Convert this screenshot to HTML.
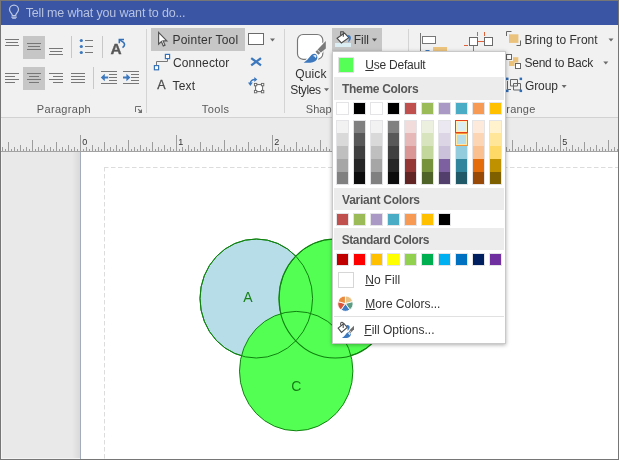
<!DOCTYPE html>
<html>
<head>
<meta charset="utf-8">
<title>Visio Fill Menu</title>
<style>
html,body{margin:0;padding:0;}
body{width:619px;height:460px;overflow:hidden;background:#fff;font-family:"Liberation Sans",sans-serif;}
#frame{position:absolute;left:0;top:0;width:619px;height:460px;background:#767676;overflow:hidden;}
#app{position:absolute;left:1px;top:1px;width:617px;height:458px;overflow:hidden;background:#fff;}
#wrap{position:absolute;left:-1px;top:-1px;width:619px;height:460px;will-change:transform;}
.abs{position:absolute;}
#title{left:1px;top:1px;width:617px;height:24px;background:#3955a3;}
#ribbon{left:1px;top:25px;width:617px;height:92px;background:#f1f1f1;}
#ribline{left:1px;top:117px;width:617px;height:1px;background:#d2d2d2;}
#rulerbg{left:1px;top:118px;width:617px;height:33px;background:#ebebeb;}
#paste{left:1px;top:152px;width:79px;height:307px;background:linear-gradient(to right,#e9e9e9 0,#e9e9e9 71px,#d9d9d9 79px);}
#pageedge{left:80px;top:152px;width:1px;height:307px;background:#a4adbb;}
#page{left:81px;top:152px;width:537px;height:307px;background:#fff;}
#margin{display:none;}
.t{position:absolute;white-space:nowrap;line-height:1;color:#333;font-size:12px;}
.gl{position:absolute;white-space:nowrap;line-height:1;color:#5a5a5a;font-size:11px;}
.rl{position:absolute;white-space:nowrap;line-height:1;color:#333;font-size:9px;}
.hl{position:absolute;background:#c6c6c6;}
.vsep{position:absolute;width:1px;background:#c8c8c8;}
.gsep{position:absolute;width:1px;background:#d4d4d4;top:29px;height:84px;}
svg{position:absolute;left:0;top:0;overflow:visible;}
#menu{left:332px;top:51px;width:172px;height:291px;background:#fff;border:1px solid #c9c9c9;box-shadow:0 1px 4px rgba(0,0,0,.32);}
.mh{position:absolute;left:334px;width:170px;background:#ececec;}
.mt{position:absolute;white-space:nowrap;line-height:1;color:#333;font-size:12px;}
.mb{position:absolute;white-space:nowrap;line-height:1;color:#575757;font-size:12px;font-weight:bold;}
.sw{position:absolute;width:11px;height:11px;border:1px solid #e4e4e6;}
.col{position:absolute;width:11px;height:63px;border:1px solid #e4e4e6;top:120px;}
.col i{display:block;height:13px;}
.col i:first-child{height:12px;}
.col i:last-child{height:12px;}
u{text-decoration:underline;text-underline-offset:1px;text-decoration-thickness:1px;}
</style>
</head>
<body>
<div id="frame"><div id="app"><div id="wrap">
<div id="title" class="abs"></div>
<div id="ribbon" class="abs"></div>
<div id="ribline" class="abs"></div>
<div id="rulerbg" class="abs"></div>
<div id="paste" class="abs"></div>
<div id="page" class="abs"></div>
<div id="pageedge" class="abs"></div>
<div class="abs" style="left:1px;top:118px;width:1px;height:341px;background:#f3f3f3;"></div>
<div class="abs" style="left:1px;top:458px;width:79px;height:1px;background:#f3f3f3;"></div>
<div id="margin" class="abs"></div>
<svg width="619" height="460" viewBox="0 0 619 460">
<rect x="1" y="151" width="617" height="1" fill="#a3a3a3"/>
<path d="M104 167.5 H618" stroke="#dcdcdc" stroke-width="1" stroke-dasharray="4.5 2.5" fill="none"/><path d="M104.5 167 V459" stroke="#dcdcdc" stroke-width="1" stroke-dasharray="4.5 2.5" fill="none"/>
<path d="M2.5 151v-4M5.5 151v-2M8.5 151v-9M11.5 151v-2M14.5 151v-4M17.5 151v-2M20.5 151v-6M23.5 151v-2M26.5 151v-4M29.5 151v-2M32.5 151v-11M35.5 151v-2M38.5 151v-4M41.5 151v-2M44.5 151v-6M47.5 151v-2M50.5 151v-4M53.5 151v-2M56.5 151v-9M59.5 151v-2M62.5 151v-4M65.5 151v-2M68.5 151v-6M71.5 151v-2M74.5 151v-4M77.5 151v-2M80.5 151v-16M83.5 151v-2M86.5 151v-4M89.5 151v-2M92.5 151v-6M95.5 151v-2M98.5 151v-4M101.5 151v-2M104.5 151v-9M107.5 151v-2M110.5 151v-4M113.5 151v-2M116.5 151v-6M119.5 151v-2M122.5 151v-4M125.5 151v-2M128.5 151v-11M131.5 151v-2M134.5 151v-4M137.5 151v-2M140.5 151v-6M143.5 151v-2M146.5 151v-4M149.5 151v-2M152.5 151v-9M155.5 151v-2M158.5 151v-4M161.5 151v-2M164.5 151v-6M167.5 151v-2M170.5 151v-4M173.5 151v-2M176.5 151v-16M179.5 151v-2M182.5 151v-4M185.5 151v-2M188.5 151v-6M191.5 151v-2M194.5 151v-4M197.5 151v-2M200.5 151v-9M203.5 151v-2M206.5 151v-4M209.5 151v-2M212.5 151v-6M215.5 151v-2M218.5 151v-4M221.5 151v-2M224.5 151v-11M227.5 151v-2M230.5 151v-4M233.5 151v-2M236.5 151v-6M239.5 151v-2M242.5 151v-4M245.5 151v-2M248.5 151v-9M251.5 151v-2M254.5 151v-4M257.5 151v-2M260.5 151v-6M263.5 151v-2M266.5 151v-4M269.5 151v-2M272.5 151v-16M275.5 151v-2M278.5 151v-4M281.5 151v-2M284.5 151v-6M287.5 151v-2M290.5 151v-4M293.5 151v-2M296.5 151v-9M299.5 151v-2M302.5 151v-4M305.5 151v-2M308.5 151v-6M311.5 151v-2M314.5 151v-4M317.5 151v-2M320.5 151v-11M323.5 151v-2M326.5 151v-4M329.5 151v-2M332.5 151v-6M335.5 151v-2M338.5 151v-4M341.5 151v-2M344.5 151v-9M347.5 151v-2M350.5 151v-4M353.5 151v-2M356.5 151v-6M359.5 151v-2M362.5 151v-4M365.5 151v-2M368.5 151v-16M371.5 151v-2M374.5 151v-4M377.5 151v-2M380.5 151v-6M383.5 151v-2M386.5 151v-4M389.5 151v-2M392.5 151v-9M395.5 151v-2M398.5 151v-4M401.5 151v-2M404.5 151v-6M407.5 151v-2M410.5 151v-4M413.5 151v-2M416.5 151v-11M419.5 151v-2M422.5 151v-4M425.5 151v-2M428.5 151v-6M431.5 151v-2M434.5 151v-4M437.5 151v-2M440.5 151v-9M443.5 151v-2M446.5 151v-4M449.5 151v-2M452.5 151v-6M455.5 151v-2M458.5 151v-4M461.5 151v-2M464.5 151v-16M467.5 151v-2M470.5 151v-4M473.5 151v-2M476.5 151v-6M479.5 151v-2M482.5 151v-4M485.5 151v-2M488.5 151v-9M491.5 151v-2M494.5 151v-4M497.5 151v-2M500.5 151v-6M503.5 151v-2M506.5 151v-4M509.5 151v-2M512.5 151v-11M515.5 151v-2M518.5 151v-4M521.5 151v-2M524.5 151v-6M527.5 151v-2M530.5 151v-4M533.5 151v-2M536.5 151v-9M539.5 151v-2M542.5 151v-4M545.5 151v-2M548.5 151v-6M551.5 151v-2M554.5 151v-4M557.5 151v-2M560.5 151v-16M563.5 151v-2M566.5 151v-4M569.5 151v-2M572.5 151v-6M575.5 151v-2M578.5 151v-4M581.5 151v-2M584.5 151v-9M587.5 151v-2M590.5 151v-4M593.5 151v-2M596.5 151v-6M599.5 151v-2M602.5 151v-4M605.5 151v-2M608.5 151v-11M611.5 151v-2M614.5 151v-4M617.5 151v-2" stroke="#9c9c9c" stroke-width="1" fill="none"/>

<ellipse cx="256.3" cy="298.5" rx="56.3" ry="59.5" fill="#b7dde8" stroke="#0f820f" stroke-width="1"/>
<ellipse cx="335.3" cy="298.5" rx="56.3" ry="59.5" fill="#54ff54" stroke="#0f820f" stroke-width="1"/>
<ellipse cx="296.2" cy="371.1" rx="56.7" ry="59.7" fill="#54ff54" stroke="#0f820f" stroke-width="1"/>
<ellipse cx="256.3" cy="298.5" rx="56.3" ry="59.5" fill="none" stroke="#0f820f" stroke-width="1"/>
<ellipse cx="335.3" cy="298.5" rx="56.3" ry="59.5" fill="none" stroke="#0f820f" stroke-width="1.1"/>
<text x="247.8" y="302.3" text-anchor="middle" font-family="Liberation Sans" font-size="14" fill="#178017">A</text>
<text x="296.2" y="391.2" text-anchor="middle" font-family="Liberation Sans" font-size="14" fill="#178017">C</text>

</svg>
<span class="rl" style="left:82.3px;top:138px;">0</span><span class="rl" style="left:178.3px;top:138px;">1</span><span class="rl" style="left:274.3px;top:138px;">2</span><span class="rl" style="left:370.3px;top:138px;">3</span><span class="rl" style="left:466.3px;top:138px;">4</span><span class="rl" style="left:562.3px;top:138px;">5</span>
<div class="hl" style="left:23px;top:36px;width:22px;height:23px;"></div>
<div class="hl" style="left:23px;top:67px;width:22px;height:23px;"></div>
<div class="hl" style="left:151px;top:28px;width:94px;height:23px;"></div>
<div class="hl" style="left:332px;top:28px;width:50px;height:23px;"></div>
<div class="vsep" style="left:71px;top:36px;height:22px;"></div>
<div class="vsep" style="left:102px;top:36px;height:22px;"></div>
<div class="vsep" style="left:93px;top:67px;height:22px;"></div>
<div class="gsep" style="left:146px;"></div>
<div class="gsep" style="left:284px;"></div>
<div class="gsep" style="left:408px;"></div>
<span class="t" id="t_tell" style="top:7px;font-size:12.5px;left:25.65px;letter-spacing:-0.163px;color:#b7c2e2;">Tell me what you want to do...</span>
<span class="t" id="t_pointer" style="top:34px;font-size:12px;left:172.48px;letter-spacing:0.231px;">Pointer Tool</span>
<span class="t" id="t_conn" style="top:57px;font-size:12px;left:172.94px;letter-spacing:0.118px;">Connector</span>
<span class="t" id="t_text" style="top:80px;font-size:12px;left:172.57px;letter-spacing:0.179px;">Text</span>
<span class="t" id="t_quick" style="top:68px;font-size:12px;left:295.29px;letter-spacing:0.110px;">Quick</span>
<span class="t" id="t_styles" style="top:84px;font-size:12px;left:290.30px;letter-spacing:-0.381px;">Styles</span>
<span class="t" id="t_fill" style="top:34px;font-size:12px;left:353.78px;letter-spacing:-0.018px;">Fill</span>
<span class="t" id="t_btf" style="top:34px;font-size:12px;left:524.48px;letter-spacing:0.037px;">Bring to Front</span>
<span class="t" id="t_stb" style="top:57px;font-size:12px;left:524.40px;letter-spacing:-0.219px;">Send to Back</span>
<span class="t" id="t_group" style="top:80px;font-size:12px;left:524.94px;letter-spacing:-0.086px;">Group</span>
<span class="gl" id="t_para" style="top:104px;font-size:11px;left:36.87px;letter-spacing:0.310px;">Paragraph</span>
<span class="gl" id="t_tools" style="top:104px;font-size:11px;left:201.71px;letter-spacing:0.425px;">Tools</span>
<span class="gl" id="t_shape" style="top:104px;font-size:11px;left:305.80px;letter-spacing:0.02px;">Shape Styles</span>
<span class="gl" id="t_arr" style="top:104px;font-size:11px;right:83.50px;letter-spacing:0.2px;">Arrange</span>
<svg width="619" height="460" viewBox="0 0 619 460">
<rect x="5" y="39" width="14" height="1" fill="#777"/>
<rect x="6" y="42" width="12" height="1" fill="#777"/>
<rect x="5" y="45" width="14" height="1" fill="#777"/>
<rect x="27" y="43" width="14" height="1" fill="#777"/>
<rect x="28" y="46" width="12" height="1" fill="#777"/>
<rect x="27" y="49" width="14" height="1" fill="#777"/>
<rect x="49" y="48" width="14" height="1" fill="#777"/>
<rect x="50" y="51" width="12" height="1" fill="#777"/>
<rect x="49" y="54" width="14" height="1" fill="#777"/>
<rect x="5" y="73" width="14" height="1" fill="#777"/>
<rect x="27" y="73" width="14" height="1" fill="#777"/>
<rect x="49" y="73" width="14" height="1" fill="#777"/>
<rect x="71" y="73" width="14" height="1" fill="#777"/>
<rect x="5" y="76" width="10" height="1" fill="#777"/>
<rect x="29" y="76" width="10" height="1" fill="#777"/>
<rect x="53" y="76" width="10" height="1" fill="#777"/>
<rect x="71" y="76" width="14" height="1" fill="#777"/>
<rect x="5" y="79" width="14" height="1" fill="#777"/>
<rect x="27" y="79" width="14" height="1" fill="#777"/>
<rect x="49" y="79" width="14" height="1" fill="#777"/>
<rect x="71" y="79" width="14" height="1" fill="#777"/>
<rect x="5" y="82" width="10" height="1" fill="#777"/>
<rect x="29" y="82" width="10" height="1" fill="#777"/>
<rect x="53" y="82" width="10" height="1" fill="#777"/>
<rect x="71" y="82" width="14" height="1" fill="#777"/>
<circle cx="81.3" cy="40.5" r="1.6" fill="#3c78bd"/>
<rect x="85" y="40" width="8" height="1" fill="#777"/>
<circle cx="81.3" cy="46.5" r="1.6" fill="#3c78bd"/>
<rect x="85" y="46" width="8" height="1" fill="#777"/>
<circle cx="81.3" cy="52.5" r="1.6" fill="#3c78bd"/>
<rect x="85" y="52" width="8" height="1" fill="#777"/>
<text x="110.5" y="54" font-family="Liberation Sans" font-weight="bold" font-size="15.4" fill="#575757" stroke="#575757" stroke-width="0.35">A</text>
<path d="M119.3 43.3 V39.5 H124" fill="none" stroke="#3471b8" stroke-width="1.5"/><path d="M119.7 39.9 L122.8 41.9 C125 43.4 125.4 45.5 122.5 47.7" fill="none" stroke="#3471b8" stroke-width="1.6"/>
<rect x="101" y="71" width="16" height="1" fill="#777"/>
<rect x="101" y="83" width="16" height="1" fill="#777"/>
<rect x="109" y="74" width="8" height="1" fill="#777"/>
<rect x="109" y="77" width="8" height="1" fill="#777"/>
<rect x="109" y="80" width="8" height="1" fill="#777"/>
<rect x="123" y="71" width="16" height="1" fill="#777"/>
<rect x="123" y="83" width="16" height="1" fill="#777"/>
<rect x="131" y="74" width="8" height="1" fill="#777"/>
<rect x="131" y="77" width="8" height="1" fill="#777"/>
<rect x="131" y="80" width="8" height="1" fill="#777"/>
<path d="M100.8 77.5 l4 -3.8 v2.7 h3.4 v2.2 h-3.4 v2.7z" fill="#3c78bd"/>
<path d="M130.4 77.5 l-4 -3.8 v2.7 h-3.4 v2.2 h3.4 v2.7z" fill="#3c78bd"/>
<path d="M135.5 112 V106.5 H141" fill="none" stroke="#707070" stroke-width="1"/><path d="M142 109 V113 H138 Z" fill="#707070"/><path d="M138.2 109.2 L140.6 111.6" stroke="#707070" stroke-width="1.2"/>
<path d="M158.6 32.4 v11.8 l2.8 -2.6 l1.9 4.3 l1.7 -0.8 l-1.9 -4.2 h3.7z" fill="#fff" stroke="#555" stroke-width="1.2" stroke-linejoin="miter"/>
<path d="M156.5 65.5 v-4 h11 v-3" fill="none" stroke="#777" stroke-width="1"/>
<rect x="165.4" y="54.4" width="4.2" height="4.2" fill="#fff" stroke="#3572b8" stroke-width="1.2"/><rect x="154.4" y="65.6" width="4.2" height="4.2" fill="#fff" stroke="#3572b8" stroke-width="1.2"/>
<text x="157.3" y="89" font-family="Liberation Sans" font-size="12.5" fill="#4c4c4c" stroke="#4c4c4c" stroke-width="0.3">A</text>
<rect x="248.5" y="33.5" width="15" height="11" fill="#fff" stroke="#6a6a6a"/>
<path d="M270 38.5 h5 l-2.5 3z" fill="#6a6a6a"/>
<path d="M251.2 58.1 L261 65.4 M261 58.1 L251.2 65.4" fill="none" stroke="#3c78bd" stroke-width="2.3"/>
<rect x="255.6" y="84.6" width="7" height="7" fill="#fff" stroke="#666"/>
<rect x="254.4" y="83.4" width="2.4" height="2.4" fill="#fff" stroke="#666" stroke-width="0.9"/>
<rect x="261.4" y="83.4" width="2.4" height="2.4" fill="#fff" stroke="#666" stroke-width="0.9"/>
<rect x="254.4" y="90.4" width="2.4" height="2.4" fill="#fff" stroke="#666" stroke-width="0.9"/>
<rect x="261.4" y="90.4" width="2.4" height="2.4" fill="#fff" stroke="#666" stroke-width="0.9"/>
<path d="M250.4 83.6 C250.3 81 252.3 79.5 255 79.5" fill="none" stroke="#3c78bd" stroke-width="1.4"/><path d="M254.3 77 l3 2.5 l-3 2.5z" fill="#3c78bd"/><path d="M248 82.6 h4.8 l-2.4 3.3z" fill="#3c78bd"/>
<rect x="297.5" y="34.5" width="25.3" height="24.8" rx="5.6" fill="#fff" stroke="#787878" stroke-width="1.15"/>
<clipPath id="qsclip"><rect x="296.8" y="33.8" width="26.7" height="26.2" rx="6"/></clipPath><g clip-path="url(#qsclip)"><path d="M325.8 40.9 L325.8 48.4 L318.3 54.8 L315.5 51.8 Z" fill="#fff" stroke="#fff" stroke-width="2.2"/><path d="M303.7 62.7 C308 60.2 309.6 56.6 312 54.6 C314.5 52.8 317.6 54.5 317.4 57.6 C317.1 61 313.6 62.8 310 62.7 Z" fill="#fff" stroke="#fff" stroke-width="2.2"/></g>
<path d="M325.8 40.9 L325.8 48.4 L318.3 54.8 L315.5 51.8 Z" fill="#7a7a7a"/>
<path d="M317.3 49.8 L320.9 53.1" stroke="#fff" stroke-width="0.9"/>
<path d="M303.7 62.7 C308 60.2 309.6 56.6 312 54.6 C314.5 52.8 317.6 54.5 317.4 57.6 C317.1 61 313.6 62.8 310 62.7 Z" fill="#3c78bd"/>
<path d="M313 56 c1 -1.3 2.6 -1.3 3.4 -0.3 c0 1.4 -0.6 2 -1 2.3 c-0.4 -1.2 -1.2 -1.8 -2.4 -2z" fill="#fff" opacity=".9"/>
<path d="M324 88.3 h5 l-2.5 3z" fill="#6a6a6a"/>
<rect x="335" y="43" width="16" height="4" fill="#dbeef4"/>
<path d="M337.1 38.3 L344.5 33 L348.8 37.6 L341.4 42.9 Z" fill="#fff" stroke="#4a4a4a" stroke-width="1.1" stroke-linejoin="miter"/>
<path d="M340.7 35 v-3.2 h2.6 v5" fill="none" stroke="#4a4a4a" stroke-width="1.1"/>
<path d="M346.9 35.2 C349 34.7 351.1 36 350.9 38 C350.7 40 349.6 41.5 348.2 42.4 C348.6 40.6 348.9 39 348.9 37.6 Z" fill="#3c78bd"/>
<path d="M372 38.5 h5 l-2.5 3z" fill="#4a4a4a"/>
<rect x="420" y="33" width="1" height="20" fill="#777"/>
<rect x="422.5" y="36.5" width="13" height="7" fill="#fff" stroke="#777"/>
<rect x="433" y="47" width="14" height="8" fill="#ecc47e"/>
<rect x="425.5" y="50" width="4" height="1" fill="#3c78bd"/>
<rect x="469.5" y="37.5" width="8" height="8" fill="#fff" stroke="#6a6a6a"/><rect x="484.5" y="37.5" width="8" height="8" fill="#fff" stroke="#6a6a6a"/>
<rect x="478" y="41" width="6" height="1" fill="#e0603a"/><rect x="477" y="32" width="1" height="4" fill="#e0603a"/><rect x="484" y="32" width="1" height="4" fill="#e0603a"/><rect x="464" y="45" width="4" height="1" fill="#e0603a"/><rect x="473" y="46" width="1" height="6" fill="#e0603a"/>
<rect x="509" y="34.3" width="9.4" height="8.6" fill="#ebc27c"/>
<path d="M506.5 36 v-4.5 h5 M516.5 45.5 h4 v-5" fill="none" stroke="#666" stroke-width="1"/>
<path d="M608.5 38.5 h5 l-2.5 3z" fill="#6a6a6a"/>
<rect x="509" y="61" width="5.5" height="5" fill="#ebc27c"/><rect x="513" y="57.2" width="5.3" height="5.3" fill="#ebc27c"/>
<rect x="506.5" y="54.5" width="5" height="5" fill="#fff" stroke="#666"/><rect x="515.5" y="63.5" width="5" height="5" fill="#fff" stroke="#666"/>
<path d="M603.3 61.5 h5 l-2.5 3z" fill="#6a6a6a"/>
<path d="M507.5 81 v8.5 h3.5 M510.5 79.5 h7 v6.5 h-7z M513.5 83.5 h7 v6.5 h-7z" fill="none" stroke="#666" stroke-width="1"/>
<rect x="506" y="77.6" width="2.5" height="2.5" fill="#2f6db5"/>
<rect x="519.6" y="77.6" width="2.5" height="2.5" fill="#2f6db5"/>
<rect x="506" y="89.6" width="2.5" height="2.5" fill="#2f6db5"/>
<rect x="519.6" y="89.6" width="2.5" height="2.5" fill="#2f6db5"/>
<path d="M561.6 85 h5 l-2.5 3z" fill="#6a6a6a"/>
<path d="M12.3 15.5 C12.3 13.2 9.5 12.4 9.5 9.5 A4.5 4.5 0 0 1 18.5 9.5 C18.5 12.4 15.7 13.2 15.7 15.5 Z" fill="none" stroke="#bcc7e4" stroke-width="1.25"/><rect x="11.3" y="16.6" width="5.5" height="1.2" fill="#bcc7e4"/><rect x="12.2" y="17.9" width="3.7" height="0.9" fill="#bcc7e4"/>
</svg>
<div id="menu" class="abs"></div>
<div class="mh" style="top:77px;height:23px;"></div>
<div class="mh" style="top:188px;height:22px;"></div>
<div class="mh" style="top:228px;height:22px;"></div>
<div class="abs" style="left:334px;top:316px;width:170px;height:1px;background:#e1e1e1;"></div>
<div class="abs" style="left:338px;top:57px;width:14px;height:14px;border:1px solid #e2e2e2;background:#55ff55;"></div>
<div class="abs" style="left:338px;top:272px;width:14px;height:14px;border:1px solid #d6d6d6;background:#fff;"></div>
<span class="mt" id="m_use" style="top:59px;font-size:12px;left:365.30px;letter-spacing:-0.236px;"><u>U</u>se Default</span>
<span class="mb" id="m_theme" style="top:83px;font-size:12px;left:342.08px;letter-spacing:-0.313px;">Theme Colors</span>
<span class="mb" id="m_var" style="top:194px;font-size:12px;left:342.08px;letter-spacing:-0.265px;">Variant Colors</span>
<span class="mb" id="m_std" style="top:234px;font-size:12px;left:341.68px;letter-spacing:-0.404px;">Standard Colors</span>
<span class="mt" id="m_nofill" style="top:274px;font-size:12px;left:365.28px;letter-spacing:0.158px;"><u>N</u>o Fill</span>
<span class="mt" id="m_more" style="top:298px;font-size:12px;left:365.28px;letter-spacing:-0.018px;"><u>M</u>ore Colors...</span>
<span class="mt" id="m_opts" style="top:324px;font-size:12px;left:364.28px;letter-spacing:0.016px;"><u>F</u>ill Options...</span>
<div class="sw" style="left:336px;top:102px;background:#ffffff;"></div>
<div class="sw" style="left:353px;top:102px;background:#000000;"></div>
<div class="sw" style="left:370px;top:102px;background:#ffffff;"></div>
<div class="sw" style="left:387px;top:102px;background:#000000;"></div>
<div class="sw" style="left:404px;top:102px;background:#c0504d;"></div>
<div class="sw" style="left:421px;top:102px;background:#9bbb59;"></div>
<div class="sw" style="left:438px;top:102px;background:#a999c4;"></div>
<div class="sw" style="left:455px;top:102px;background:#4bacc6;"></div>
<div class="sw" style="left:472px;top:102px;background:#f79a54;"></div>
<div class="sw" style="left:489px;top:102px;background:#ffc000;"></div>
<div class="col" style="left:336px;"><i style="background:#f2f2f2"></i><i style="background:#d9d9d9"></i><i style="background:#bfbfbf"></i><i style="background:#a6a6a6"></i><i style="background:#808080"></i></div>
<div class="col" style="left:353px;"><i style="background:#808080"></i><i style="background:#595959"></i><i style="background:#404040"></i><i style="background:#262626"></i><i style="background:#0d0d0d"></i></div>
<div class="col" style="left:370px;"><i style="background:#f2f2f2"></i><i style="background:#d9d9d9"></i><i style="background:#bfbfbf"></i><i style="background:#a6a6a6"></i><i style="background:#808080"></i></div>
<div class="col" style="left:387px;"><i style="background:#808080"></i><i style="background:#595959"></i><i style="background:#404040"></i><i style="background:#262626"></i><i style="background:#0d0d0d"></i></div>
<div class="col" style="left:404px;"><i style="background:#f2dcdb"></i><i style="background:#e6b9b8"></i><i style="background:#d99694"></i><i style="background:#953735"></i><i style="background:#632523"></i></div>
<div class="col" style="left:421px;"><i style="background:#ebf1de"></i><i style="background:#d7e4bd"></i><i style="background:#c3d69b"></i><i style="background:#77933c"></i><i style="background:#4f6228"></i></div>
<div class="col" style="left:438px;"><i style="background:#ece8f2"></i><i style="background:#dcd5e6"></i><i style="background:#cbc1da"></i><i style="background:#7c60a0"></i><i style="background:#523f6b"></i></div>
<div class="col" style="left:455px;"><i style="background:#dbeef4"></i><i style="background:#b7dee8"></i><i style="background:#93cddd"></i><i style="background:#31859c"></i><i style="background:#215968"></i></div>
<div class="col" style="left:472px;"><i style="background:#fdeada"></i><i style="background:#fcd5b5"></i><i style="background:#fac090"></i><i style="background:#e46c0a"></i><i style="background:#984807"></i></div>
<div class="col" style="left:489px;"><i style="background:#fff2cc"></i><i style="background:#ffe699"></i><i style="background:#ffd966"></i><i style="background:#bf9000"></i><i style="background:#7f6000"></i></div>
<div class="sw" style="left:336px;top:213px;background:#c0504d;"></div>
<div class="sw" style="left:353px;top:213px;background:#9bbb59;"></div>
<div class="sw" style="left:370px;top:213px;background:#a999c4;"></div>
<div class="sw" style="left:387px;top:213px;background:#4bacc6;"></div>
<div class="sw" style="left:404px;top:213px;background:#f79a54;"></div>
<div class="sw" style="left:421px;top:213px;background:#ffc000;"></div>
<div class="sw" style="left:438px;top:213px;background:#000000;"></div>
<div class="sw" style="left:336px;top:253px;background:#c00000;"></div>
<div class="sw" style="left:353px;top:253px;background:#ff0000;"></div>
<div class="sw" style="left:370px;top:253px;background:#ffc000;"></div>
<div class="sw" style="left:387px;top:253px;background:#ffff00;"></div>
<div class="sw" style="left:404px;top:253px;background:#92d050;"></div>
<div class="sw" style="left:421px;top:253px;background:#00b050;"></div>
<div class="sw" style="left:438px;top:253px;background:#00b0f0;"></div>
<div class="sw" style="left:455px;top:253px;background:#0070c0;"></div>
<div class="sw" style="left:472px;top:253px;background:#002060;"></div>
<div class="sw" style="left:489px;top:253px;background:#7030a0;"></div>
<div class="abs" style="left:455px;top:120px;width:11px;height:11px;border:1px solid #e5421d;background:#dbeef4;box-shadow:inset 0 0 0 1px #ffefb5;"></div>
<div class="abs" style="left:455px;top:133px;width:11px;height:11px;border:1px solid #f29432;background:#b7dee8;box-shadow:inset 0 0 0 1px #ffe9a6;"></div>
<svg width="619" height="460" viewBox="0 0 619 460">
<path d="M345.4 303.6 L345.40 296.00 A7.6 7.6 0 0 1 352.74 301.63z" fill="#e9c184" stroke="#fff" stroke-width="0.9"/>
<path d="M345.4 303.6 L352.74 301.63 A7.6 7.6 0 0 1 349.76 309.83z" fill="#5c9c83" stroke="#fff" stroke-width="0.9"/>
<path d="M345.4 303.6 L349.76 309.83 A7.6 7.6 0 0 1 341.04 309.83z" fill="#3f7cc4" stroke="#fff" stroke-width="0.9"/>
<path d="M345.4 303.6 L341.04 309.83 A7.6 7.6 0 0 1 338.06 301.63z" fill="#d7553c" stroke="#fff" stroke-width="0.9"/>
<path d="M345.4 303.6 L338.06 301.63 A7.6 7.6 0 0 1 345.40 296.00z" fill="#ea8a3c" stroke="#fff" stroke-width="0.9"/>
<path d="M338.1 328.1 L343.9 323.5 L347.2 327.4 L341.5 332.4 Z" fill="#fff" stroke="#4a4a4a" stroke-width="1.05" stroke-linejoin="miter"/>
<path d="M340.7 325.6 v-2.3 q0 -1.1 1.1 -1.1 h0.3 q1.1 0 1.1 1.1 v4.6" fill="none" stroke="#4a4a4a" stroke-width="1.05"/>
<path d="M346.2 325 C348 324.6 349.8 325.4 349.7 327 C349.6 328.6 348.6 329.9 347.4 330.8 C347.7 329.4 347.5 328.3 347.3 327.4 Z" fill="#3c78bd"/>
<path d="M354 325.7 L354 329.3 L350.6 333 L348.6 331.1 Z" fill="#6e6e6e"/>
<path d="M349.2 330.2 L351.5 332.3" stroke="#fff" stroke-width="0.7"/>
<path d="M341.9 338 C344.6 336.5 345.4 334.2 346.8 332.9 C348.4 331.5 350.9 332.6 350.8 334.6 C350.6 336.9 348.4 338.1 346.2 338 Z" fill="#3c78bd"/>
<path d="M347.8 333.6 c0.7 -0.8 1.8 -0.8 2.3 -0.1 c0 1 -0.4 1.4 -0.8 1.7 c-0.3 -0.9 -0.8 -1.4 -1.5 -1.6z" fill="#fff" opacity=".92"/>
</svg>
</div></div></div>
</body>
</html>
